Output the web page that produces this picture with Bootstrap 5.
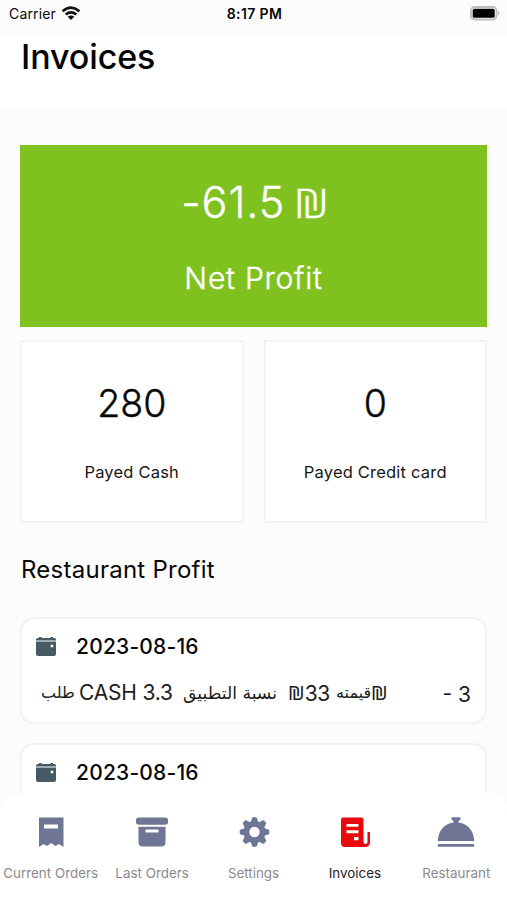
<!DOCTYPE html>
<html lang="en">
<head>
<meta charset="utf-8">
<meta name="viewport" content="width=device-width, initial-scale=1">
<title>Invoices</title>
<link href="https://cdn.jsdelivr.net/npm/bootstrap@5.3.0/dist/css/bootstrap.min.css" rel="stylesheet">
<style>
html,body{height:100%}
body{font-family:Inter,"Noto Sans","DejaVu Sans",sans-serif;background:#fcfcfc;color:#080808;overflow:hidden}
.phone{height:900px}
.status-bar{height:35px;font-size:14px;padding:0 6px 7px 9px;line-height:1}
.status-bar>div{flex:1 1 0}
.carrier{letter-spacing:.15px}
.time{font-weight:600;letter-spacing:.4px;margin-left:-1px}
.page-head{height:73px;padding:0 21px}
.page-title{font-size:34px;font-weight:500;line-height:43px;letter-spacing:-.1px;color:#050505}
.content{padding:37px 20px 0;min-height:0}
.net{background:#7fc220;height:182px;color:#fff}
.amount,.net-label,.num{-webkit-text-stroke:.4px currentColor}
.amount{font-size:43px;font-weight:300;line-height:52px;margin-top:31px;letter-spacing:.9px;word-spacing:-4px}
.net-label{font-size:30px;font-weight:300;line-height:40px;letter-spacing:.75px;word-spacing:0;margin-top:30px}
.sheqel{display:inline-block;font-family:"Noto Sans",sans-serif;letter-spacing:0;transform:translateY(-1px) scale(.98,.93);transform-origin:0 77%}
.amount .sheqel{transform:scale(1.09,.93)}
.stats{gap:20px;margin-top:13px}
.stat{height:183px;border:2px solid #f2f2f2;background:#fff}
.num{font-size:37.5px;line-height:48px;margin-top:38px;font-weight:300}
.stat-label{font-size:16.5px;line-height:24px;margin-top:32px;letter-spacing:.2px;color:#161616}
.section-title{font-size:24px;font-weight:400;line-height:32px;margin:31px 0 31px 1px;letter-spacing:.25px}
.entry{height:107px;border:2px solid #f2f2f2;border-radius:14px;background:#fff;padding:12px 14px 0 13px;margin-bottom:19px}
.date{font-size:21px;font-weight:500;line-height:30px;margin:1px 0 0 19px;letter-spacing:.2px}
.detail{font-size:21px;line-height:30px;margin-top:16px;padding-left:6px;color:#1c1c1c;white-space:pre}
.detail>span{flex:none;text-align:left}
.ar{font-family:"DejaVu Sans",sans-serif;font-size:17.2px}
.w-order{width:38px}
.w-order,.w-value{font-size:16px}
.w-cash{width:104px;letter-spacing:-.2px}
.w-share{width:105px}
.w-sum{width:48px;letter-spacing:-.4px}
.w-value{width:35px}
.charge{margin-top:2px}
.tabs{height:107px;background:#fff;border-radius:20px 20px 0 0;padding-top:22px}
.tab{flex:1 1 0;min-width:0;color:#8b8b8b;font-size:13.4px;line-height:20px;white-space:nowrap}
.tab svg{width:38px;height:34px;fill:#6f7595;margin-bottom:14px}
.tab.current{color:#222}
.tab.current svg{fill:#e8090c}
</style>
<script src="https://cdn.jsdelivr.net/npm/bootstrap@5.3.0/dist/js/bootstrap.bundle.min.js"></script>
</head>
<body>
<div class="phone d-flex flex-column overflow-hidden">
  <div class="status-bar d-flex align-items-center flex-shrink-0">
    <div class="d-flex align-items-center"><span class="carrier">Carrier</span>
      <svg class="ms-1" width="20" height="16" viewBox="0 0 20 16" fill="none" stroke="#111" stroke-width="2.6"><path d="M2.600 5.200Q11-1.900 19.400 5.200M5.700 8.500Q11 4.300 16.300 8.500"/><path d="M7.700 10.800Q11 8.200 14.300 10.800L11 14.100Z" fill="#111" stroke="none"/></svg>
    </div>
    <span class="time">8:17 PM</span>
    <div class="d-flex justify-content-end">
      <svg width="31" height="16" viewBox="0 0 31 16"><rect x="1" y="1" width="25.500" height="12.500" rx="3.500" fill="#fff" stroke="#bdbdbd" stroke-width="1.800"/><rect x="2.700" y="2.700" width="22" height="9" rx="1.500"/><path d="M28 5Q31 7.200 28 9.500Z" fill="#bdbdbd"/></svg>
    </div>
  </div>
  <header class="page-head bg-white flex-shrink-0"><h1 class="page-title m-0">Invoices</h1></header>
  <main class="content flex-grow-1 overflow-hidden">
    <section class="net text-center overflow-hidden"><div class="amount">-61.5 <span class="sheqel">₪</span></div><div class="net-label">Net Profit</div></section>
    <section class="stats d-flex text-center">
      <div class="stat flex-fill w-50"><div class="num">280</div><div class="stat-label">Payed Cash</div></div>
      <div class="stat flex-fill w-50"><div class="num">0</div><div class="stat-label">Payed Credit card</div></div>
    </section>
    <h2 class="section-title">Restaurant Profit</h2>
    <article class="entry">
      <div class="d-flex align-items-center"><svg width="22" height="22" viewBox="0 0 22 22" fill="#455a64"><path d="M1 4.500V3.500q0-1.500 2-1.500h1V1h2.500v1h9V1H18v1h1q2 0 2 1.500v1z"/><path fill-rule="evenodd" d="M1 5.500h20V18q0 2-2 2H3q-2 0-2-2zM15.700 8.700v2.500h2.500V8.700z"/></svg><span class="date">2023-08-16</span></div>
      <div class="detail d-flex"><span class="ar w-order">طلب</span><span class="w-cash">CASH 3.3</span><span class="ar w-share" dir="rtl">نسبة التطبيق</span><span class="w-sum"><span class="sheqel">₪</span>33</span><span class="ar w-value">قيمته</span><span class="sheqel">₪</span><span class="charge ms-auto">- 3</span></div>
    </article>
    <article class="entry">
      <div class="d-flex align-items-center"><svg width="22" height="22" viewBox="0 0 22 22" fill="#455a64"><path d="M1 4.500V3.500q0-1.500 2-1.500h1V1h2.500v1h9V1H18v1h1q2 0 2 1.500v1z"/><path fill-rule="evenodd" d="M1 5.500h20V18q0 2-2 2H3q-2 0-2-2zM15.700 8.700v2.500h2.500V8.700z"/></svg><span class="date">2023-08-16</span></div>
    </article>
  </main>
  <nav class="tabs d-flex text-center flex-shrink-0">
    <div class="tab d-flex flex-column align-items-center"><svg viewBox="0 0 38 34"><path fill-rule="evenodd" d="M7 2.500H31.500V32L27 29 23.500 31 19.200 28 15 31 11.500 29 7 32ZM12 9.500V13.500H26V9.500Z"/></svg><span>Current Orders</span></div>
    <div class="tab d-flex flex-column align-items-center"><svg viewBox="0 0 38 34"><rect x="3" y="2.500" width="32" height="7.300" rx="2.800"/><path fill-rule="evenodd" d="M5.500 11.700H32.500V27.500Q32.500 31.500 28.500 31.500H9.500Q5.500 31.500 5.500 27.500ZM12.500 14.500V17.500H25.500V14.500Z"/></svg><span>Last Orders</span></div>
    <div class="tab d-flex flex-column align-items-center"><svg viewBox="0 0 38 34"><g transform="translate(19.500 17)"><path fill-rule="evenodd" d="M0-11A11 11 0 1 0 0 11A11 11 0 1 0 0-11ZM0-5.200A5.200 5.200 0 1 1 0 5.200A5.200 5.200 0 1 1 0-5.200Z"/><path id="tooth" d="M-3.800-9.500L-2.500-13.700Q-2.300-14.800-1.300-14.800H1.300Q2.300-14.800 2.500-13.700L3.800-9.500Z"/><use href="#tooth" transform="rotate(45)"/><use href="#tooth" transform="rotate(90)"/><use href="#tooth" transform="rotate(135)"/><use href="#tooth" transform="rotate(180)"/><use href="#tooth" transform="rotate(225)"/><use href="#tooth" transform="rotate(270)"/><use href="#tooth" transform="rotate(315)"/></g></svg><span>Settings</span></div>
    <div class="tab current d-flex flex-column align-items-center"><svg viewBox="0 0 38 34"><path fill-rule="evenodd" d="M7 2.500H25.500Q27.500 2.500 27.500 4.500V27Q27.500 29 29.500 29Q31.500 29 31.500 27V17H34V27Q34 32 29 32H9Q5 32 5 28V4.500Q5 2.500 7 2.500ZM10.500 9V11.800H22.500V9ZM10.500 15.300V18.200H22.500V15.300ZM18 22V25.200H22.500V22Z"/></svg><span>Invoices</span></div>
    <div class="tab d-flex flex-column align-items-center"><svg viewBox="0 0 38 34"><path d="M14.500 3Q14.500 2.300 15.500 2.300H22.500Q23.500 2.300 23.500 3V4.800Q21.500 5.300 21.500 6.500V7.500Q36 10 37.300 26H.7Q2 10 16.500 7.500V6.500Q16.500 5.300 14.500 4.800Z"/><rect x=".7" y="29" width="36.600" height="2.800" rx="1"/></svg><span>Restaurant</span></div>
  </nav>
</div>
</body>
</html>
